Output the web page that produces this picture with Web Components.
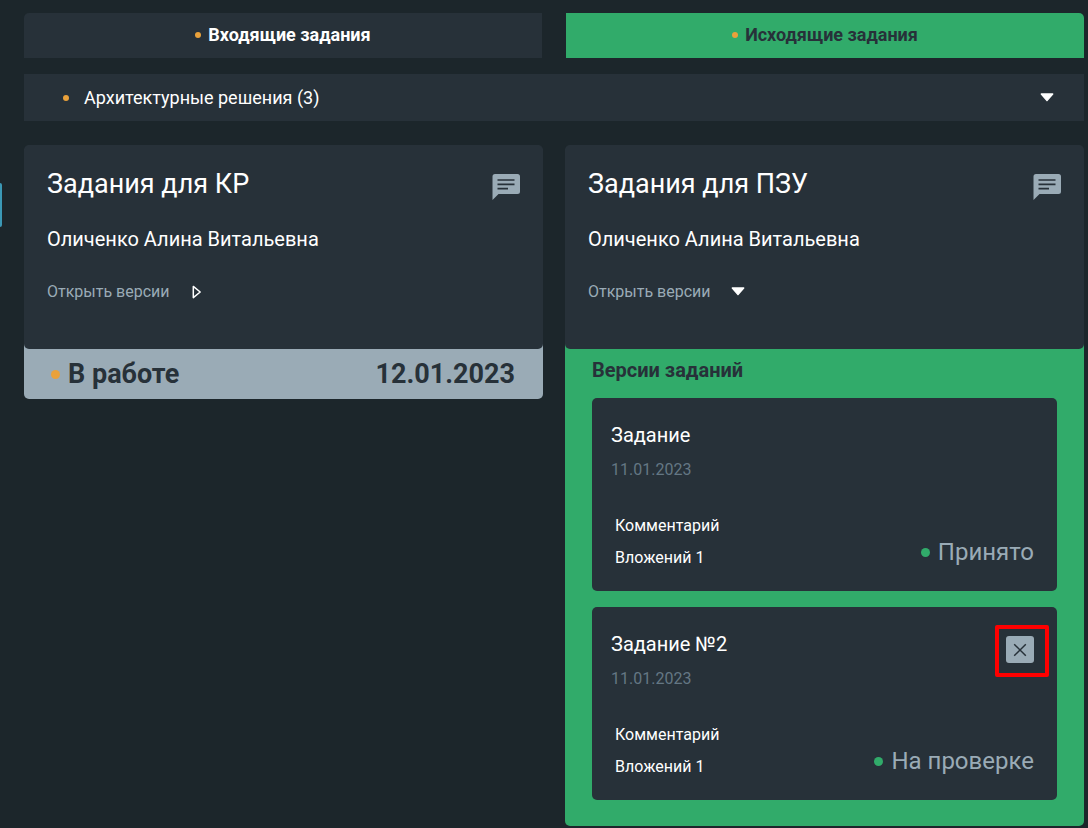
<!DOCTYPE html>
<html lang="ru">
<head>
<meta charset="utf-8">
<meta name="viewport" content="width=device-width, initial-scale=1">
<title>Задания</title>
<style>
  :root {
    --page: #1c262b;
    --panel: #273139;
    --green: #31ab6a;
    --steel: #9aabb6;
    --muted: #647784;
    --orange: #e9a13b;
  }
  body {
    margin: 0;
    background: var(--page);
    color: #fff;
    font-family: Roboto, "Liberation Sans", sans-serif;
    font-size: 16px;
  }
</style>
</head>
<body>
<task-board></task-board>

<template id="t-board">
  <style>
    :host { display: block; position: relative; padding: 13px 4px 2px 24px; }
    .drawer { position: absolute; left: 0; top: 183px; width: 2px; height: 44px; padding: 0; border: 0; border-radius: 0 2px 2px 0; background: #3b98b5; }
    nav { display: grid; grid-template-columns: 1fr 1fr; gap: 24px; }
    group-bar { margin-top: 16px; }
    main { display: grid; grid-template-columns: 1fr 1fr; gap: 22px; margin-top: 24px; align-items: start; }
  </style>
  <button class="drawer" aria-label="Открыть меню"></button>
  <nav>
    <task-tab side="left">Входящие задания</task-tab>
    <task-tab side="right" active>Исходящие задания</task-tab>
  </nav>
  <group-bar>Архитектурные решения (3)</group-bar>
  <main>
    <task-card>
      <span slot="title">Задания для КР</span>
      <span slot="person">Оличенко Алина Витальевна</span>
      <status-bar slot="footer">
        <span slot="state">В работе</span>
        <time slot="date" datetime="2023-01-12">12.01.2023</time>
      </status-bar>
    </task-card>
    <task-card open>
      <span slot="title">Задания для ПЗУ</span>
      <span slot="person">Оличенко Алина Витальевна</span>
      <version-list slot="footer">
        <version-card>
          <span slot="title">Задание</span>
          <time slot="date" datetime="2023-01-11">11.01.2023</time>
          <span slot="state">Принято</span>
        </version-card>
        <version-card removable>
          <span slot="title">Задание №2</span>
          <time slot="date" datetime="2023-01-11">11.01.2023</time>
          <span slot="state">На проверке</span>
        </version-card>
      </version-list>
    </task-card>
  </main>
</template>

<template id="t-dot">
  <style>
    :host { display: inline-block; flex: none; width: 6px; height: 6px; border-radius: 50%; background: var(--orange); }
    :host([large]) { width: 9px; height: 9px; }
    :host([green]) { background: var(--green); }
  </style>
</template>

<template id="t-tab">
  <style>
    :host { display: block; }
    button { display: flex; align-items: center; justify-content: center; gap: 7px; width: 100%; height: 45px; padding: 0 0 2px; border: 0; background: var(--panel); color: #fff; font: 700 18px/20px Roboto, sans-serif; cursor: pointer; }
    :host([side="left"]) button { border-radius: 5px 0 0 0; }
    :host([side="right"]) button { border-radius: 0 5px 0 0; }
    :host([active]) button { background: var(--green); color: var(--panel); }
  </style>
  <button type="button"><status-dot></status-dot><slot></slot></button>
</template>

<template id="t-group">
  <style>
    :host { display: block; }
    button { display: flex; align-items: center; width: 100%; height: 47px; padding: 0 30px 0 39px; border: 0; background: var(--panel); color: #fff; font: 400 18px/20px Roboto, sans-serif; cursor: pointer; }
    .name { flex: 1; margin-left: 15px; text-align: left; }
  </style>
  <button type="button"><status-dot></status-dot><span class="name"><slot></slot></span><caret-icon down></caret-icon></button>
</template>

<template id="t-caret">
  <style>
    :host { display: block; width: 14px; height: 14px; }
    svg { display: block; }
    .down, :host([down]) .right { display: none; }
    :host([down]) .down { display: block; }
  </style>
  <svg class="right" width="14" height="14" viewBox="0 0 14 14" aria-hidden="true"><path d="M3.3 1.4 10.200 7 3.3 12.600Z" fill="none" stroke="#fff" stroke-width="1.5" stroke-linejoin="round"/></svg>
  <svg class="down" width="14" height="14" viewBox="0 0 14 14" aria-hidden="true"><path d="M1.3 3h11.400L7 9.600Z" fill="#fff" stroke="#fff" stroke-width="1.4" stroke-linejoin="round"/></svg>
</template>

<template id="t-card">
  <style>
    :host { display: block; background: var(--steel); border-radius: 8px 8px 5px 5px; }
    :host([open]) { background: var(--green); }
    .body { padding: 23px 23px 47px; border-radius: 5px; background: var(--panel); }
    header { display: flex; justify-content: space-between; }
    h2 { margin: 0; font-size: 27px; font-weight: 400; line-height: 32px; }
    .person { margin: 27px 0 0; font-size: 20px; line-height: 24px; }
    button { border: 0; padding: 0; background: none; cursor: pointer; }
    .chat { height: 27px; margin-top: 5px; }
    .toggle { display: flex; align-items: center; gap: 20px; margin-top: 31px; color: var(--steel); font: 400 16px/20px Roboto, sans-serif; }
    svg { display: block; }
  </style>
  <div class="body">
    <header>
      <h2><slot name="title"></slot></h2>
      <button class="chat" type="button" aria-label="Комментарии">
        <svg width="28" height="27" viewBox="0 0 28 27"><path d="M3 1h22.500a2.500 2.500 0 0 1 2.500 2.500v15a2.500 2.500 0 0 1-2.500 2.500H6.500L.500 27V3.500A2.500 2.500 0 0 1 3 1Z" fill="#9aabb6"/><path d="M5.500 7h17M5.500 11.300h17M5.500 15.700h10.500" stroke="#273139" stroke-width="1.700"/></svg>
      </button>
    </header>
    <p class="person"><slot name="person"></slot></p>
    <button class="toggle" type="button">Открыть версии<caret-icon></caret-icon></button>
  </div>
  <slot name="footer"></slot>
</template>

<template id="t-status">
  <style>
    :host { display: flex; justify-content: space-between; align-items: center; height: 50px; padding: 0 28px 0 27px; color: var(--panel); font-size: 27px; font-weight: 700; line-height: 32px; }
    div { display: flex; align-items: center; gap: 8px; }
  </style>
  <div><status-dot large></status-dot><slot name="state"></slot></div>
  <slot name="date"></slot>
</template>

<template id="t-versions">
  <style>
    :host { display: block; padding: 9px 27px 26px; }
    h3 { margin: 0 0 16px; color: var(--panel); font-size: 20px; font-weight: 700; line-height: 24px; }
    .list { display: grid; gap: 16px; }
  </style>
  <h3>Версии заданий</h3>
  <div class="list"><slot></slot></div>
</template>

<template id="t-version">
  <style>
    :host { display: block; padding: 25px 23px 23px 19px; border-radius: 5px; background: var(--panel); }
    header, footer { display: flex; justify-content: space-between; }
    h4 { margin: 0; font-size: 20px; font-weight: 400; line-height: 24px; }
    .date { margin-top: 13px; color: var(--muted); line-height: 20px; }
    button { border: 0; padding: 0; background: none; color: #fff; font: 400 16px/20px Roboto, sans-serif; cursor: pointer; }
    footer { margin-top: 36px; padding-left: 4px; }
    .links { display: grid; gap: 12px; justify-items: start; }
    .state { display: flex; align-items: center; align-self: end; gap: 8px; padding-bottom: 2px; color: var(--steel); font-size: 24px; line-height: 28px; }
    .remove { display: none; position: relative; width: 28px; height: 27px; margin-top: 4px; border-radius: 3px; background: var(--steel); }
    :host([removable]) .remove { display: block; }
    .remove::after { content: ""; position: absolute; inset: -11px -15px -14px -11px; border: 4px solid #f00; border-radius: 2px; }
    svg { display: block; margin: auto; }
  </style>
  <header>
    <div>
      <h4><slot name="title"></slot></h4>
      <div class="date"><slot name="date"></slot></div>
    </div>
    <button class="remove" type="button" aria-label="Удалить">
      <svg width="14" height="14" viewBox="0 0 14 14"><path d="m1.200 1.200 11.600 11.600M12.800 1.200 1.200 12.800" stroke="#273139" stroke-width="1.500"/></svg>
    </button>
  </header>
  <footer>
    <div class="links">
      <button type="button">Комментарий</button>
      <button type="button">Вложений 1</button>
    </div>
    <div class="state"><status-dot large green></status-dot><slot name="state"></slot></div>
  </footer>
</template>

<script>
  class TemplateElement extends HTMLElement {
    constructor() {
      super();
      const template = document.getElementById(this.constructor.template);
      this.attachShadow({ mode: "open" }).append(template.content.cloneNode(true));
    }
  }

  class StatusDot extends TemplateElement { static template = "t-dot"; }
  class CaretIcon extends TemplateElement { static template = "t-caret"; }
  class TaskTab extends TemplateElement { static template = "t-tab"; }
  class GroupBar extends TemplateElement { static template = "t-group"; }
  class TaskCard extends TemplateElement {
    static template = "t-card";
    connectedCallback() {
      const open = this.hasAttribute("open");
      this.shadowRoot.querySelector("caret-icon").toggleAttribute("down", open);
      this.shadowRoot.querySelector(".toggle").setAttribute("aria-expanded", open);
    }
  }
  class StatusBar extends TemplateElement { static template = "t-status"; }
  class VersionList extends TemplateElement { static template = "t-versions"; }
  class VersionCard extends TemplateElement { static template = "t-version"; }
  class TaskBoard extends TemplateElement { static template = "t-board"; }

  customElements.define("status-dot", StatusDot);
  customElements.define("caret-icon", CaretIcon);
  customElements.define("task-tab", TaskTab);
  customElements.define("group-bar", GroupBar);
  customElements.define("task-card", TaskCard);
  customElements.define("status-bar", StatusBar);
  customElements.define("version-list", VersionList);
  customElements.define("version-card", VersionCard);
  customElements.define("task-board", TaskBoard);
</script>
</body>
</html>
